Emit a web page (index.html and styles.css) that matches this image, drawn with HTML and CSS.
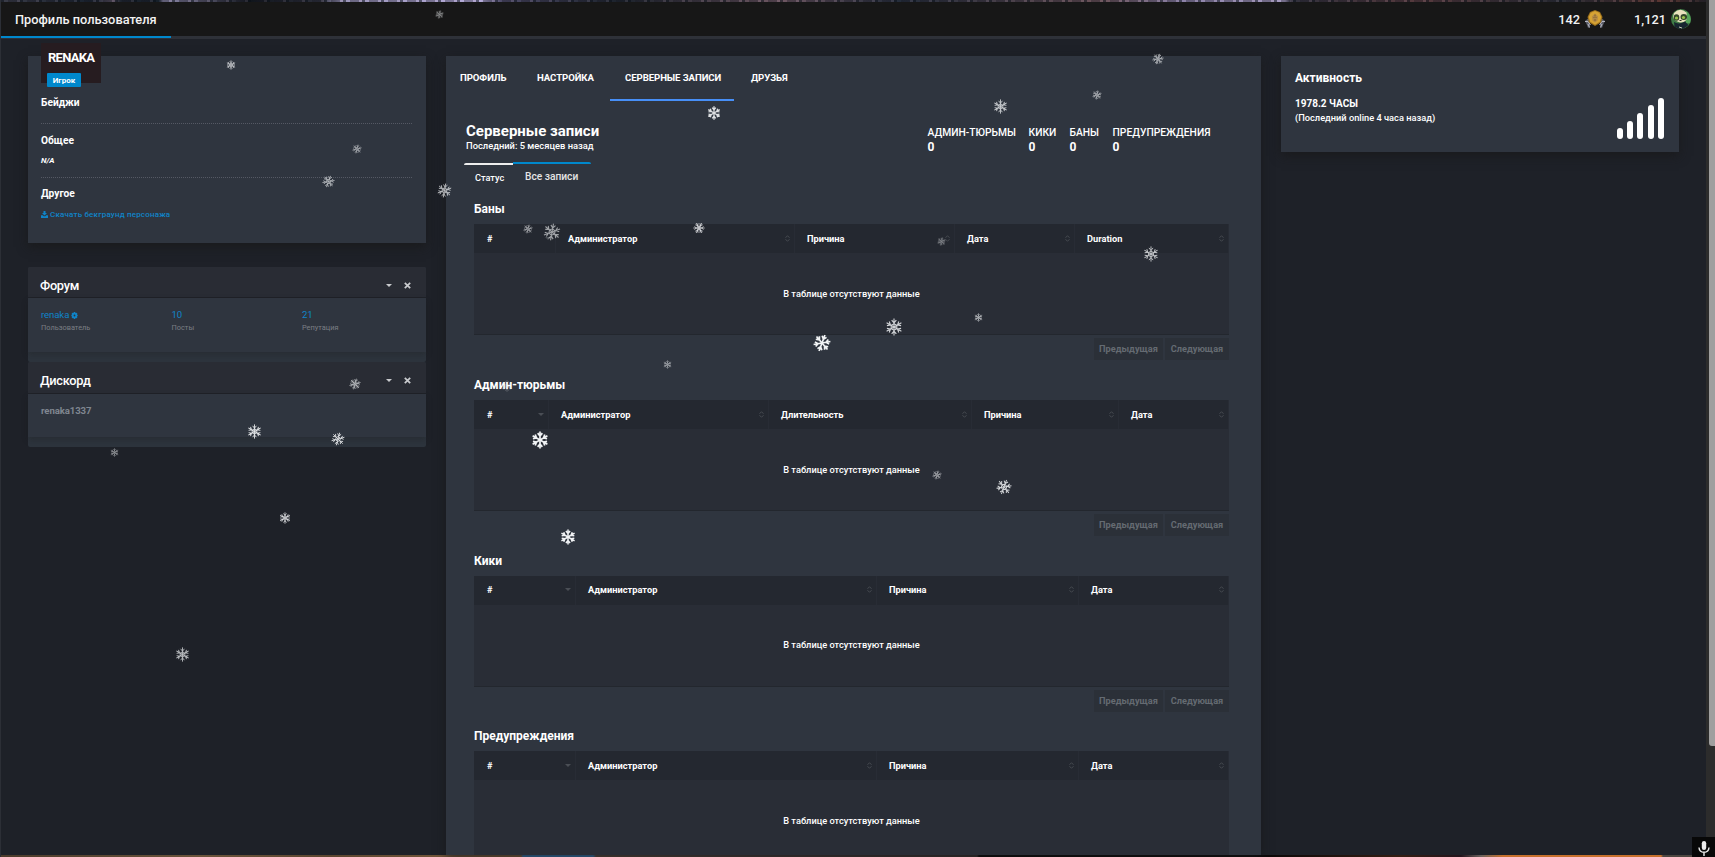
FILE: index.html
```
<!DOCTYPE html>
<html lang="ru">
<head>
<meta charset="utf-8">
<title>Профиль пользователя</title>
<link rel="stylesheet" href="styles.css">
</head>
<body>
<svg width="0" height="0" class="defs">
  <defs>
    <g id="arm-a"><path d="M0 0V-9.500M0 -4.500L-2.600 -7.600M0 -4.500L2.600 -7.600"/></g>
    <symbol id="flake" viewBox="-10 -10 20 20"><g fill="none" stroke="currentColor" stroke-width="1.200"><use href="#arm-a"/><use href="#arm-a" transform="rotate(60)"/><use href="#arm-a" transform="rotate(120)"/><use href="#arm-a" transform="rotate(180)"/><use href="#arm-a" transform="rotate(240)"/><use href="#arm-a" transform="rotate(300)"/><path d="M0 -3.600L3.100 -1.800V1.800L0 3.600L-3.100 1.800V-1.800Z"/></g></symbol>
    <symbol id="flake-bold" viewBox="-10 -10 20 20"><g fill="none" stroke="currentColor" stroke-width="1.900"><use href="#arm-a"/><use href="#arm-a" transform="rotate(60)"/><use href="#arm-a" transform="rotate(120)"/><use href="#arm-a" transform="rotate(180)"/><use href="#arm-a" transform="rotate(240)"/><use href="#arm-a" transform="rotate(300)"/></g></symbol>
    <symbol id="sort" viewBox="0 0 5 7"><path d="M.5 2.800L2.500 .7L4.500 2.800M.5 4.200L2.500 6.300L4.500 4.200" fill="none" stroke="currentColor" stroke-width=".9"/></symbol>
    <symbol id="down" viewBox="0 0 6 3"><path d="M0 0H6L3 3Z" fill="currentColor"/></symbol>
    <symbol id="close" viewBox="0 0 7 7"><path d="M.8 .8L6.200 6.200M6.200 .8L.8 6.200" stroke="currentColor" stroke-width="1.700"/></symbol>
  </defs>
</svg>
<div class="page">
  <div class="strip strip-top"></div>
  <header class="topbar">
    <h1>Профиль пользователя</h1>
    <div class="tokens">
      <span class="t1">142</span>
      <svg class="medal" width="22" height="20" viewBox="0 0 22 20"><path d="M1 12L6 8V18L4 19L3 16ZM21 12L16 8V18L18 19L19 16Z" fill="#5d606b"/><path d="M1 12.500H4L6.500 16M21 12.500H18L15.500 16M4 15L5.500 18.500M18 15L16.500 18.500" stroke="#b5b6c2" fill="none"/><path d="M11 1L16 3L18.500 8L17 13.500L11 17L5 13.500L3.500 8L6 3Z" fill="#9d711d"/><path d="M11 2L15.300 3.800L17.300 8L15.800 12.800L11 15.800L6.200 12.800L4.700 8L6.700 3.800Z" fill="#d6a334"/><path d="M11 4.500L14 7.500L13.500 11.500L11 13.500L8.500 11.500L8 7.500Z" fill="#b58a45"/><path d="M11 5.500V7.500M9.500 8.500H10.500M11.500 8.500H12.500M10 11H12" stroke="#806131"/></svg>
      <span class="t2">1,121</span>
      <svg class="panda" width="20" height="20" viewBox="0 0 20 20"><circle cx="10" cy="10" r="10" fill="#3f7a45"/><path d="M15 2A10 10 0 0 1 19 14L15 14Z" fill="#57a65b"/><path d="M3 4Q9 -2 15.500 3.500L16 9Q15 13.500 9 13.500Q3 12 2 8Z" fill="#e9e2bd"/><path d="M3 13Q8 16 14 12.500L17.500 16Q10 23 3.500 17.500Z" fill="#182530"/><ellipse cx="5.500" cy="8.500" rx="2.800" ry="3.300" fill="#33472a"/><ellipse cx="12.800" cy="8" rx="3.300" ry="3" fill="#33472a"/><circle cx="5.500" cy="9" r="1.600" fill="#9cc44d"/><circle cx="12.500" cy="8.500" r="1.600" fill="#9cc44d"/><path d="M8.500 11.500H10.500" stroke="#2d3428"/><path d="M8 18L11 19" stroke="#c9cdb8"/></svg>
    </div>
  </header>
  <div class="rule"><div class="rule-on"></div></div>
  <main class="cols">
    <aside class="left">
      <section class="card user">
        <div class="tag"><b>RENAKA</b><span>Игрок</span></div>
        <h3 class="u1">Бейджи</h3>
        <hr>
        <h3 class="u2">Общее</h3>
        <p class="na">N/A</p>
        <hr>
        <h3 class="u3">Другое</h3>
        <a class="dl"><svg width="7" height="7" viewBox="0 0 7 7"><path d="M2.500 0H4.500V2H6L3.500 4.600L1 2H2.500ZM0 4.300H1.800L2.800 5.200H4.200L5.200 4.300H7V7H0Z" fill="currentColor"/></svg><span>Скачать бекграунд персонажа</span></a>
      </section>
      <section class="box forum">
        <header><h2>Форум</h2><svg class="dn"><use href="#down"/></svg><svg class="cl"><use href="#close"/></svg></header>
        <div class="box-body">
          <div class="stat"><a>renaka<svg width="7" height="7" viewBox="0 0 7 7"><path d="M2.800 0H4.200L4.500 1L5.600 .7L6.500 2L6 2.800L7 3.500L6 4.200L6.500 5L5.600 6.300L4.500 6L4.200 7H2.800L2.500 6L1.400 6.300L.5 5L1 4.200L0 3.500L1 2.800L.5 2L1.400 .7L2.500 1ZM3.500 2.600A.9 .9 0 1 0 3.510 4.400A.9 .9 0 1 0 3.500 2.600Z" fill="currentColor" fill-rule="evenodd"/></svg></a><small>Пользователь</small></div>
          <div class="stat"><a>10</a><small>Посты</small></div>
          <div class="stat"><a>21</a><small>Репутация</small></div>
        </div>
        <div class="box-foot"></div>
      </section>
      <section class="box discord">
        <header><h2>Дискорд</h2><svg class="dn"><use href="#down"/></svg><svg class="cl"><use href="#close"/></svg></header>
        <div class="box-body"><b>renaka1337</b></div>
        <div class="box-foot"></div>
      </section>
    </aside>
    <section class="center">
      <nav class="tabs"><a class="n1">ПРОФИЛЬ</a><a class="n2">НАСТРОЙКА</a><a class="n3 on">СЕРВЕРНЫЕ ЗАПИСИ</a><a class="n4">ДРУЗЬЯ</a></nav>
      <div class="summary">
        <div class="sum-title"><h2>Серверные записи</h2><p>Последний: 5 месяцев назад</p></div>
        <dl><div class="d1"><dt>АДМИН-ТЮРЬМЫ</dt><dd>0</dd></div><div class="d2"><dt>КИКИ</dt><dd>0</dd></div><div class="d3"><dt>БАНЫ</dt><dd>0</dd></div><div class="d4"><dt>ПРЕДУПРЕЖДЕНИЯ</dt><dd>0</dd></div></dl>
      </div>
      <div class="subtabs"><a class="s1">Статус</a><a class="s2">Все записи</a></div>
      <div id="records" class="records"></div>
    </section>
    <aside class="card activity">
      <h3>Активность</h3><b>1978.2 ЧАСЫ</b><p>(Последний online 4 часа назад)</p>
      <div class="bars"><i></i><i></i><i></i><i></i><i></i></div>
    </aside>
  </main>
  <div class="strip strip-bottom"></div>
  <div class="scroll"><div class="thumb"></div></div>
  <div class="mic"><svg width="12" height="15" viewBox="0 0 12 15"><rect x="3.800" y="0" width="4.400" height="9" rx="2.200" fill="#ededed"/><path d="M1 6.500Q1.300 11.300 6 11.300Q10.700 11.300 11 6.500M6 11.300V15" fill="none" stroke="#ededed" stroke-width="1.400"/></svg></div>
  <div id="snow" class="snow"></div>
</div>
<script src="app.js"></script>
</body>
</html>
```

FILE: styles.css
```
* { box-sizing: border-box; }
body { margin: 0; background: #1e2128; color: #fff; font-family: Roboto, "Noto Sans", sans-serif; overflow: hidden; }
h1, h2, h3, p, dl, dd { margin: 0; }
.defs { position: absolute; }
.page { position: relative; width: 1715px; height: 857px; overflow: hidden; border-left: 1px solid #2c2f36; }
.strip { height: 2px; }
.strip-top { background: repeating-linear-gradient(90deg, rgba(8, 14, 22, .55) 0 3px, transparent 3px 7px, rgba(20, 20, 30, .35) 7px 16px, rgba(150, 130, 150, .15) 16px 19px), linear-gradient(90deg, #3a3c48 0, #18222e 90px, #5a5060 112px, #1b222c 120px, #16202a 158px, #8a87a8 162px, #5c5a70 200px, #10151c 250px, #2c2f3b 320px, #9a94b8 340px, #b7addb 480px, #4e4b68 500px, #1b222b 620px, #6e5762 780px, #232c3a 900px, #6b5258 1100px, #8c82a8 1180px, #a79cc2 1284px, #30303c 1290px, #573a3d 1420px, #2b2e36 1560px, #5a3530 1660px, #202228 1715px); }
.topbar { height: 34px; width: 1705px; background: #171717; display: flex; justify-content: space-between; padding: 0 15px 0 14px; }
h1 { font-size: 12.8px; font-weight: 500; line-height: 35px; color: #f2f2f2; }
.tokens { display: flex; align-items: center; font-size: 12.8px; font-weight: 500; line-height: 35px; color: #f2f2f2; }
.medal { margin: 0 28px 0 4px; }
.panda { margin-left: 5px; }
.rule { height: 3px; width: 1705px; background: #2e3138; }
.rule-on { width: 170px; height: 2px; background: #0088cc; }
.cols { height: 816px; width: 1705px; padding: 17px 0 0 27px; display: flex; align-items: flex-start; }
.card { background: #2f353f; box-shadow: 0 4px 10px rgba(24, 24, 24, .7); }
.left { width: 398px; margin-right: 20px; }
.user { height: 187px; padding: 0 13px; display: flex; flex-direction: column; }
.tag { width: 60px; height: 40px; margin-top: -13px; background: #261c20; display: flex; flex-direction: column; align-items: flex-start; flex: none; }
.tag b { font-size: 13px; line-height: 16px; letter-spacing: -.75px; margin: 7px 0 0 7px; }
.tag span { width: 34px; height: 14px; margin: 7px 0 0 6px; flex: none; background: #0088cc; border-radius: 1px; font-size: 8px; font-weight: 700; line-height: 15px; text-align: center; }
.user h3 { font-size: 10.2px; line-height: 14px; height: 14px; flex: none; }
.user hr { width: 371px; height: 1px; margin: 0; border: 0; border-top: 1px dotted #555964; flex: none; }
.user .u1 { margin: 13px 0 13px; }
.user .u2 { margin: 10px 0 7px; }
.na { font-size: 8px; font-weight: 700; font-style: italic; line-height: 12px; margin-bottom: 10px; }
.user .u3 { margin: 9px 0 8px; }
.dl { display: flex; align-items: center; gap: 2px; color: #0f84c8; font-size: 8px; font-weight: 500; line-height: 12px; letter-spacing: .18px; }
.dl svg { margin-top: -2px; }
.box { background: #2d343d; border-radius: 2px; }
.forum { margin-top: 24px; height: 95px; }
.discord { height: 85px; }
.box header { height: 31px; background: #292c34; border-bottom: 1px solid #1f2228; display: flex; align-items: center; padding: 6px 15px 0 12px; border-radius: 2px 2px 0 0; color: #c9cbce; }
.box h2 { font-size: 12.8px; font-weight: 500; line-height: 18px; flex: 1; letter-spacing: -.3px; color: #fff; }
.forum h2 { padding-top: 1px; }
.dn { width: 6px; height: 3px; margin-right: 12px; }
.cl { width: 7px; height: 7px; }
.box-body { height: 54px; display: grid; grid-template-columns: 130.500px 130.500px 1fr; padding: 10px 0 0 13px; background: #2f353f; box-shadow: 0 3px 6px rgba(24, 24, 24, .25); }
.discord .box-body { height: 43px; color: #7f8690; font-size: 9.6px; line-height: 14px; letter-spacing: -.1px; }
.discord header { height: 32px; }
.stat { display: flex; flex-direction: column; }
.stat a { font-size: 9.6px; line-height: 14px; color: #0f84c8; display: flex; align-items: center; gap: 2px; letter-spacing: -.1px; }
.stat small { font-size: 7.400px; line-height: 12px; color: #7b7e84; }
.center { width: 815px; height: 799px; background: #2f353f; margin-right: 20px; box-shadow: 0 4px 10px rgba(24, 24, 24, .7); }
.tabs { display: flex; height: 45px; padding-left: 14px; font-size: 9.6px; font-weight: 700; line-height: 43px; white-space: nowrap; letter-spacing: -.07px; }
.n1 { width: 77px; } .n2 { width: 73px; } .n3 { width: 124px; padding-left: 15px; margin-right: 17px; }
.tabs .on { border-bottom: 2px solid #478ff7; }
.summary { height: 62px; display: flex; padding: 20px 0 0 20px; }
.sum-title { width: 461.500px; padding-top: 1px; }
.sum-title h2 { font-size: 15px; line-height: 18px; }
.sum-title p { font-size: 9.350px; font-weight: 500; line-height: 12px; }
.summary dl { display: flex; font-size: 10.3px; font-weight: 500; line-height: 14px; padding-top: 5px; }
.summary dd { font-size: 12px; font-weight: 700; }
.d1 { width: 101px; } .d2 { width: 41px; } .d3 { width: 43px; }
.subtabs { display: flex; height: 30px; padding-left: 18px; font-size: 9.200px; font-weight: 500; }
.s1 { width: 49px; height: 29px; border-top: 2px solid #eee; line-height: 26px; padding-left: 11px; border-radius: 2px 0 0 0; }
.s2 { width: 78px; height: 29px; margin-top: -1px; border-top: 2px solid #0088cc; line-height: 26px; padding-left: 12px; border-radius: 0 2px 0 0; font-size: 10.200px; color: #e4e4e4; }
.records { padding-left: 28px; height: 662px; overflow: hidden; }
.record { height: 176px; width: 755px; }
.record:nth-child(3) { height: 175px; }
.record h3 { font-size: 12px; font-weight: 700; line-height: 20px; height: 31px; padding-top: 6px; }
.head { display: flex; height: 29px; background: #242830; }
.cell { display: flex; align-items: center; justify-content: space-between; padding: 0 4px 1px 12px; border-right: 1px solid #282c35; font-size: 9.250px; font-weight: 700; flex: none; }
.record:nth-child(3) .cell { padding-bottom: 3px; }
.cell svg { width: 5px; height: 7px; color: #4a4e55; }
.cell:first-child { padding-left: 13px; }
.cell:first-child svg { width: 6px; height: 3px; }
.none { height: 82px; background: #292d36; border-bottom: 1px solid #23272e; font-size: 9.250px; font-weight: 500; line-height: 81px; text-align: center; }
.record:nth-child(3) .none { line-height: 79px; }
.pages { display: flex; justify-content: flex-end; gap: 2px; padding-top: 3px; font-size: 9.200px; font-weight: 700; line-height: 22px; color: #656b72; }
.pages span { height: 22px; background: #2b3038; text-align: center; width: 64px; }
.pages span:first-child { width: 69px; }
.activity { width: 398px; height: 96px; padding: 14px; position: relative; }
.activity h3 { font-size: 12px; font-weight: 700; line-height: 16px; }
.activity b { display: block; font-size: 10px; line-height: 14px; margin-top: 11px; }
.activity p { font-size: 9.250px; font-weight: 500; line-height: 14px; }
.bars { position: absolute; right: 15px; bottom: 13px; display: flex; align-items: flex-end; gap: 4.300px; }
.bars i { width: 6px; border-radius: 3px; background: #fff; height: 11px; }
.bars i:nth-child(2) { height: 18px; } .bars i:nth-child(3) { height: 26px; } .bars i:nth-child(4) { height: 34px; } .bars i:nth-child(5) { height: 41px; }
.strip-bottom { background: linear-gradient(90deg, #4b3b2b 0, #6b543b 200px, #5c4630 330px, #81603f 520px, #3479b5 522px, #3479b5 592px, #594a40 595px, #463b3a 760px, #3a3232 976px, #050505 978px, #080607 1250px, #351e13 1400px, #24151c 1460px, #6b625d 1480px, #c7702c 1502px, #c7702c 1660px, #4c4640 1662px); }
.scroll { position: absolute; left: 1705px; top: 0; width: 9px; height: 857px; background: #2c2c2c; padding-left: 3px; }
.thumb { height: 746px; background: #9f9f9f; border-radius: 0 0 0 3px; }
.mic { position: absolute; right: 0; bottom: 0; width: 23px; height: 20px; background: #080808; padding: 4px 0 0 6px; }
.mic svg { display: block; }
.snow { position: absolute; inset: 0; pointer-events: none; }
.snow svg { position: absolute; transform-origin: center; color: #f1f3f5; }
```

FILE: app.js
```
const none = 'В таблице отсутствуют данные';
const tables = [
  ['Баны', ['#', 82], ['Администратор', 239], ['Причина', 160], ['Дата', 120], ['Duration', 154]],
  ['Админ-тюрьмы', ['#', 75], ['Администратор', 220], ['Длительность', 203], ['Причина', 147], ['Дата', 110]],
  ['Кики', ['#', 102], ['Администратор', 301], ['Причина', 202], ['Дата', 150]],
  ['Предупреждения', ['#', 102], ['Администратор', 301], ['Причина', 202], ['Дата', 150]]
];
const pages = '<div class="pages"><span>Предыдущая</span><span>Следующая</span></div>';
document.getElementById('records').innerHTML = tables.map(([title, ...cols], n) =>
  `<section class="record"><h3>${title}</h3><div class="head">${cols.map(([name, w], i) =>
    `<div class="cell" style="width:${w}px">${name}<svg><use href="#${i ? 'sort' : 'down'}"/></svg></div>`).join('')}</div>` +
  `<div class="none">${none}</div>${n < 3 ? pages : ''}</section>`).join('');

// x, y, size, opacity, rotation, bold
const flakes = [
  [439,14,9,.6,10],[231,65,10,.85,0],[357,149,10,.65,15],[328,181,13,.7,20],[444,190,15,.75,10],[714,113,14,.9,0,1],
  [1000,106,15,.8,0],[1097,95,10,.7,10],[1158,59,12,.7,20],[528,229,10,.65,15],[552,232,18,.6,10],[699,228,12,.95,30],
  [941,241,9,.5,10],[1151,254,16,.75,0],[978,317,9,.8,0],[894,327,18,.85,0],[822,343,18,1,20,1],[667,364,9,.65,0],
  [507,386,12,.35,0],[540,440,18,1,0,1],[937,475,10,.65,15],[1004,487,16,.85,20],[568,537,16,1,0,1],[355,384,12,.75,15],
  [254,431,15,.95,0],[338,439,14,.9,15],[114,452,9,.6,0],[285,518,12,.95,0],[182,654,15,.75,0]
];
document.getElementById('snow').innerHTML = flakes.map(([x, y, s, o, r, b]) =>
  `<svg width="${s}" height="${s}" style="left:${x - 1 - s / 2}px;top:${y - s / 2}px;opacity:${o};transform:rotate(${r}deg)"><use href="#flake${b ? '-bold' : ''}"/></svg>`).join('');
```
